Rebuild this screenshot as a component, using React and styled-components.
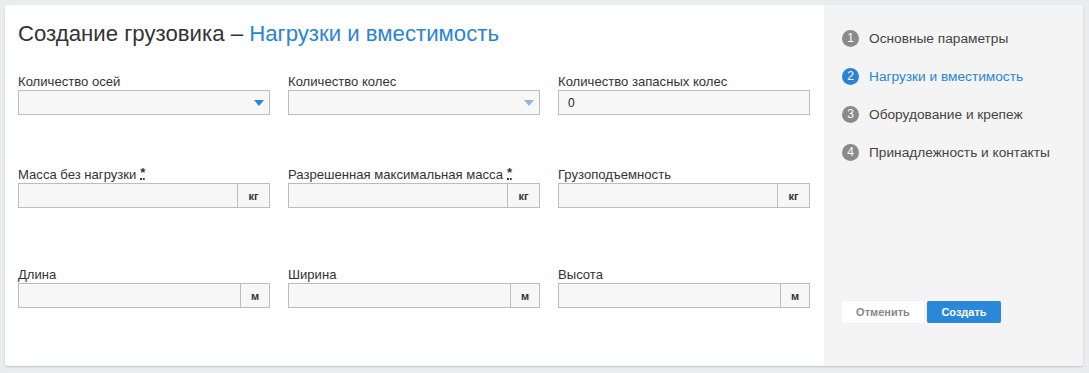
import React from "react";
import styled, { createGlobalStyle } from "styled-components";

const Global = createGlobalStyle`
  html, body { margin: 0; padding: 0; }
  body {
    background: #e9edf0;
    font-family: "Liberation Sans", Arial, sans-serif;
    color: #333;
  }
  * { box-sizing: border-box; }
`;

const Page = styled.div`
  padding: 5px 6px 7px 5px;
`;

const Card = styled.div`
  display: flex;
  height: 361px;
  background: #fff;
  border-radius: 3px;
  box-shadow: 0 1px 2px rgba(0, 0, 0, 0.18);
  overflow: hidden;
`;

const Main = styled.div`
  flex: 1;
  padding: 16px 14px 0 13px;
`;

const Title = styled.h1`
  margin: 0;
  font-size: 22.2px;
  line-height: 26px;
  font-weight: 400;
  color: #333;
`;

const Accent = styled.span`
  color: #2a84d6;
`;

const Row = styled.div`
  display: grid;
  grid-template-columns: repeat(3, 252px);
  column-gap: 18px;
  margin-top: ${(p) => p.$mt}px;
`;

const Field = styled.div`
  display: flex;
  flex-direction: column;
`;

const Label = styled.label`
  display: block;
  font-size: 13.1px;
  line-height: 17px;
  color: #333;
  white-space: nowrap;
`;

const Req = styled.abbr`
  text-decoration: none;
  border-bottom: 2px dotted #333;
  font-weight: 700;
  margin-left: 4px;
  line-height: 11px;
  display: inline-block;
  height: 13px;
  vertical-align: top;
  margin-top: 1px;
`;

const Group = styled.div`
  display: flex;
  height: 25px;
  border: 1px solid #bcbcbc;
  background: #f7f7f7;
`;

const Input = styled.div`
  flex: 1;
  display: flex;
  align-items: center;
  padding: 0 9px;
  font-size: 12px;
  color: #222;
`;

const Addon = styled.div`
  width: ${(p) => p.$w}px;
  border-left: 1px solid #bcbcbc;
  display: flex;
  align-items: center;
  justify-content: center;
  font-size: 11px;
  font-weight: 700;
  color: #333;
`;

const Select = styled.div`
  height: 25px;
  border: 1px solid #bcbcbc;
  background: #f7f7f7;
  display: flex;
  align-items: center;
  justify-content: flex-end;
  padding-right: 5px;
`;

const Arrow = styled.span`
  width: 0;
  height: 0;
  border-left: 5px solid transparent;
  border-right: 5px solid transparent;
  border-top: 6px solid ${(p) => (p.$disabled ? "#8db8e2" : "#2a84d6")};
  margin-top: 1px;
`;

const Side = styled.aside`
  width: 259px;
  background: #f4f4f4;
  padding: 24px 19px 43px 18px;
  display: flex;
  flex-direction: column;
  justify-content: space-between;
`;

const Steps = styled.ol`
  list-style: none;
  margin: 0;
  padding: 0;
  display: flex;
  flex-direction: column;
  gap: 20px;
`;

const Step = styled.li`
  display: flex;
  align-items: center;
  height: 18px;
  font-size: 13.7px;
  font-weight: 300;
  color: ${(p) => (p.$active ? "#2a84d6" : "#444")};
`;

const Num = styled.span`
  width: 17px;
  height: 17px;
  border-radius: 50%;
  background: ${(p) => (p.$active ? "#2a84d6" : "#8a8a8a")};
  color: #fff;
  font-size: 12px;
  display: inline-flex;
  align-items: center;
  justify-content: center;
  margin-right: 10px;
`;

const Buttons = styled.div`
  display: flex;
  gap: 3px;
`;

const Button = styled.button`
  height: 22px;
  width: ${(p) => p.$w}px;
  border: none;
  border-radius: 2px;
  font-family: "Liberation Sans", Arial, sans-serif;
  font-size: 11px;
  font-weight: 700;
  background: ${(p) => (p.$primary ? "#2b87d8" : "#fff")};
  color: ${(p) => (p.$primary ? "#fff" : "#888")};
  box-shadow: 0 0 1px rgba(0, 0, 0, 0.08);
  padding: 0;
`;

const UnitField = ({ label, unit, required, w = 32 }) => (
  <Field>
    <Label>
      {label}
      {required && <Req title="обязательное поле">*</Req>}
    </Label>
    <Group>
      <Input />
      <Addon $w={w}>{unit}</Addon>
    </Group>
  </Field>
);

export default function App() {
  const steps = [
    "Основные параметры",
    "Нагрузки и вместимость",
    "Оборудование и крепеж",
    "Принадлежность и контакты",
  ];
  return (
    <Page>
      <Global />
      <Card>
        <Main>
          <Title>
            Создание грузовика – <Accent>Нагрузки и вместимость</Accent>
          </Title>
          <Row $mt={26}>
            <Field>
              <Label>Количество осей</Label>
              <Select>
                <Arrow />
              </Select>
            </Field>
            <Field>
              <Label>Количество колес</Label>
              <Select>
                <Arrow $disabled />
              </Select>
            </Field>
            <Field>
              <Label>Количество запасных колес</Label>
              <Group>
                <Input>0</Input>
              </Group>
            </Field>
          </Row>
          <Row $mt={51}>
            <UnitField label="Масса без нагрузки" unit="кг" required />
            <UnitField label="Разрешенная максимальная масса" unit="кг" required />
            <UnitField label="Грузоподъемность" unit="кг" />
          </Row>
          <Row $mt={58}>
            <UnitField label="Длина" unit="м" w={29} />
            <UnitField label="Ширина" unit="м" w={29} />
            <UnitField label="Высота" unit="м" w={29} />
          </Row>
        </Main>
        <Side>
          <Steps>
            {steps.map((s, i) => (
              <Step key={s} $active={i === 1}>
                <Num $active={i === 1}>{i + 1}</Num>
                {s}
              </Step>
            ))}
          </Steps>
          <Buttons>
            <Button $w={82}>Отменить</Button>
            <Button $w={74} $primary>
              Создать
            </Button>
          </Buttons>
        </Side>
      </Card>
    </Page>
  );
}
